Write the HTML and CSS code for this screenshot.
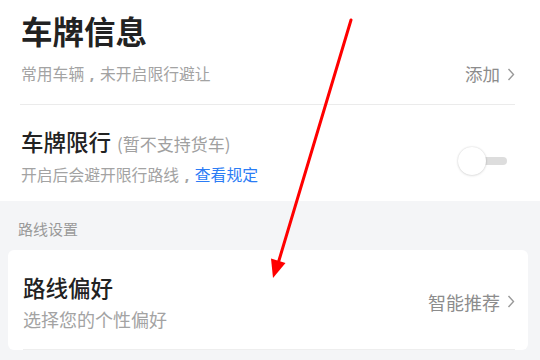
FILE: index.html
```html
<!DOCTYPE html>
<html lang="zh-CN">
<head>
<meta charset="utf-8">
<link rel="stylesheet" href="styles.css">
</head>
<body>
<div class="page">
  <div class="top">
    <div class="plate-info">
      <div class="col">
        <div class="title">车牌信息</div>
        <div class="sub">常用车辆<span class="comma">,</span>未开启限行避让</div>
      </div>
      <div class="action add">添加<svg class="chev" width="8" height="13" viewBox="0 0 8 13"><polyline points="1.5,1 6.5,6.5 1.5,12" fill="none" stroke="#999" stroke-width="1.4"/></svg></div>
    </div>
    <div class="restrict">
      <div class="col">
        <div class="title2">车牌限行<span class="note">(暂不支持货车)</span></div>
        <div class="sub sub2">开启后会避开限行路线<span class="comma">,</span><span class="link">查看规定</span></div>
      </div>
      <div class="toggle"><span class="track"></span><span class="knob"></span></div>
    </div>
  </div>
  <div class="section">
    <div class="label">路线设置</div>
    <div class="card">
      <div class="card-row">
        <div class="col">
          <div class="title3">路线偏好</div>
          <div class="sub3">选择您的个性偏好</div>
        </div>
        <div class="action pref">智能推荐<svg class="chev" width="8" height="13" viewBox="0 0 8 13"><polyline points="1.5,1 6.5,6.5 1.5,12" fill="none" stroke="#999" stroke-width="1.4"/></svg></div>
      </div>
    </div>
  </div>
  <svg class="arrow" width="540" height="360" viewBox="0 0 540 360">
    <line x1="351" y1="20" x2="278.5" y2="262" stroke="#ff0000" stroke-width="3" stroke-linecap="round"/>
    <polygon points="273,278 285.5,263 271,258.5" fill="#ff0000"/>
  </svg>
</div>
</body>
</html>
```
FILE: styles.css
```css
* { box-sizing: border-box; }
html, body { margin: 0; padding: 0; }
body {
  width: 540px;
  height: 360px;
  overflow: hidden;
  font-family: "Noto Sans CJK SC", "Noto Sans", sans-serif;
  background: #ffffff;
}
.page { position: relative; width: 540px; height: 360px; overflow: hidden; }
.top { background: #ffffff; }
.plate-info {
  display: flex;
  justify-content: space-between;
  margin: 0 25px 0 20px;
  padding: 9px 0 19px 1px;
  border-bottom: 1px solid #ebebeb;
}
.col { display: flex; flex-direction: column; }
.title {
  font-size: 31.5px;
  font-weight: 700;
  line-height: 42px;
  color: #222222;
}
.sub {
  margin-top: 12px;
  font-size: 15.8px;
  line-height: 22px;
  color: #a3a3a3;
}
.comma {
  display: inline-block;
  width: 1em;
  text-align: center;
  font-family: "Noto Sans", sans-serif;
  font-weight: 700;
}
.action {
  display: flex;
  align-items: center;
  color: #8c8c8c;
}
.add {
  align-self: flex-end;
  font-size: 17.5px;
  line-height: 22px;
}
.chev { margin-left: 7px; }
.restrict {
  display: flex;
  justify-content: space-between;
  align-items: flex-start;
  padding: 21px 32px 15px 21px;
}
.title2 {
  font-size: 22.5px;
  font-weight: 500;
  line-height: 30px;
  color: #222222;
}
.note {
  font-size: 17px;
  font-weight: 400;
  color: #a0a0a0;
  margin-left: 6px;
}
.sub2 { margin-top: 5px; }
.link { color: #2b7cf5; }
.toggle {
  position: relative;
  width: 50px;
  height: 28px;
  margin-top: 21px;
}
.track {
  position: absolute;
  left: 14px;
  top: 10px;
  width: 35px;
  height: 8px;
  border-radius: 4px;
  background: #dddddd;
}
.knob {
  position: absolute;
  left: 0;
  top: 0;
  width: 28px;
  height: 28px;
  border-radius: 50%;
  background: #ffffff;
  box-shadow: 0 0 2px rgba(0,0,0,0.18), 0 1px 3px rgba(0,0,0,0.08);
}
.section {
  background: #f4f5f7;
  padding: 18px 12px 20px 8px;
}
.label {
  padding-left: 10px;
  font-size: 15px;
  line-height: 20px;
  color: #9a9a9a;
}
.card {
  margin-top: 11px;
  background: #ffffff;
  border-radius: 6px;
  padding: 0 13px 0 15px;
}
.card-row {
  display: flex;
  justify-content: space-between;
  align-items: center;
  padding: 22px 0 18px 0;
  border-bottom: 1px solid #eeeeee;
}
.title3 {
  font-size: 22.5px;
  font-weight: 500;
  line-height: 30px;
  color: #222222;
}
.sub3 {
  margin-top: 5px;
  font-size: 18px;
  line-height: 24px;
  color: #a3a3a3;
}
.pref {
  font-size: 18px;
  line-height: 24px;
}
.arrow { position: absolute; left: 0; top: 0; pointer-events: none; }
```
